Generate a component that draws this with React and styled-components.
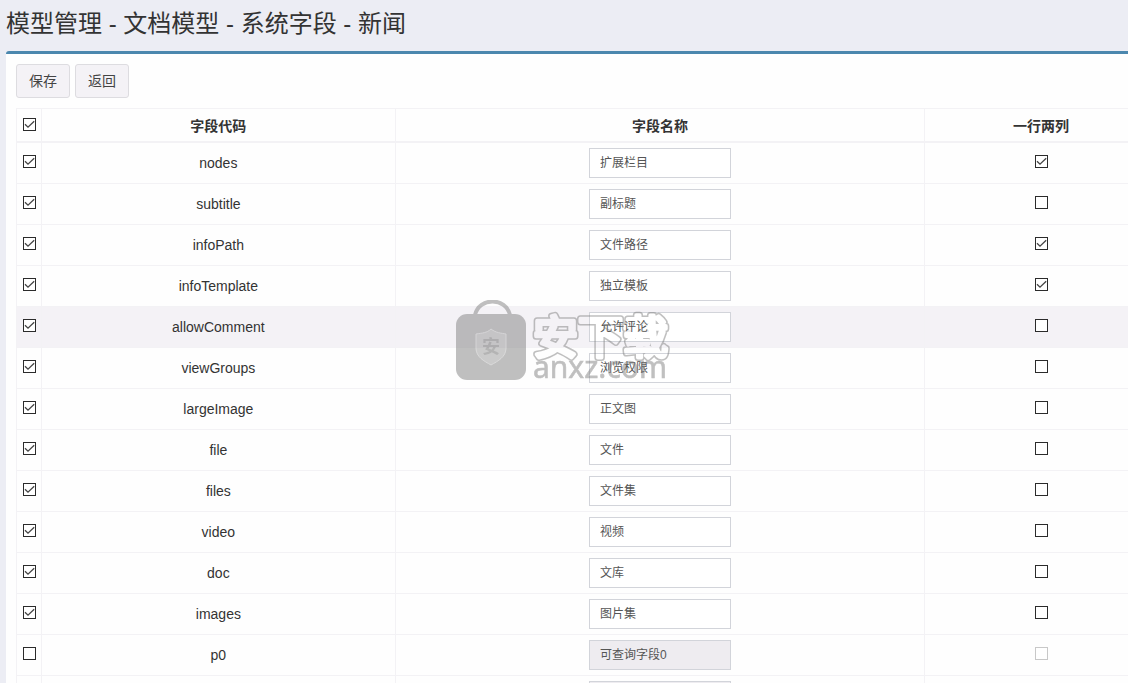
import React, { useState } from 'react';
import styled, { createGlobalStyle } from 'styled-components';

const FIELDS = [
  { code: 'nodes', name: '扩展栏目', selected: true, double: true },
  { code: 'subtitle', name: '副标题', selected: true },
  { code: 'infoPath', name: '文件路径', selected: true, double: true },
  { code: 'infoTemplate', name: '独立模板', selected: true, double: true },
  { code: 'allowComment', name: '允许评论', selected: true, active: true },
  { code: 'viewGroups', name: '浏览权限', selected: true },
  { code: 'largeImage', name: '正文图', selected: true },
  { code: 'file', name: '文件', selected: true },
  { code: 'files', name: '文件集', selected: true },
  { code: 'video', name: '视频', selected: true },
  { code: 'doc', name: '文库', selected: true },
  { code: 'images', name: '图片集', selected: true },
  { code: 'p0', name: '可查询字段0', disabled: true },
  { code: 'p1', name: '可查询字段1', disabled: true },
];

const Checkbox = ({ label, defaultChecked = false, disabled }) => {
  const [checked, setChecked] = useState(defaultChecked);

  return (
    <CheckWrap>
      <CheckInput
        type="checkbox"
        aria-label={label}
        checked={checked}
        disabled={disabled}
        onChange={(e) => setChecked(e.target.checked)}
      />
      {checked && (
        <CheckMark viewBox="0 0 13 13" aria-hidden="true">
          <path d="M2 6.2 L5 9.2 L11.2 3.2" />
        </CheckMark>
      )}
    </CheckWrap>
  );
};

const FieldRow = ({ field }) => (
  <Row $active={field.active}>
    <Cell><Checkbox label={`选择 ${field.code}`} defaultChecked={field.selected} /></Cell>
    <Cell>{field.code}</Cell>
    <Cell>
      <NameInput
        type="text"
        aria-label={`${field.code} 字段名称`}
        defaultValue={field.name}
        disabled={field.disabled}
      />
    </Cell>
    <Cell>
      <Checkbox
        label={`${field.code} 一行两列`}
        defaultChecked={field.double}
        disabled={field.disabled}
      />
    </Cell>
  </Row>
);

const Watermark = () => (
  <WatermarkSvg viewBox="0 0 216 84" aria-hidden="true">
    <defs>
      <mask id="outline" maskUnits="userSpaceOnUse" x="0" y="0" width="216" height="84">
        <g className="brand" strokeLinejoin="round">
          <text x="77" y="54" fill="#fff" stroke="#fff" strokeWidth="7">安下载</text>
          <text x="77" y="54" fill="#000" stroke="#000" strokeWidth="4">安下载</text>
        </g>
      </mask>
    </defs>
    <g opacity="0.48">
      <path d="M19 15 C23 -3 50 -3 54 15" fill="none" stroke="#7c7c7c" strokeWidth="4" />
      <rect x="0" y="14" width="70" height="66" rx="11" fill="#7c7c7c" />
      <path
        d="M35 29 C40 33 45 33 50 34 V48 C50 57 42 61 35 65 C28 61 20 57 20 48 V34 C26 33 31 33 35 29 Z"
        fill="#949494"
        stroke="#b4b4b4"
        strokeWidth="1"
      />
      <text className="badge" x="26" y="53" fill="#646464">安</text>
      <rect width="216" height="84" fill="#7c7c7c" mask="url(#outline)" />
      <text className="domain" x="77" y="78" fill="#7c7c7c" stroke="#7c7c7c" strokeWidth="0.6">anxz.com</text>
    </g>
  </WatermarkSvg>
);

const App = () => (
  <Page>
    <GlobalStyle />
    <Title>模型管理 - 文档模型 - 系统字段 - 新闻</Title>
    <Box>
      <Toolbar>
        <Button type="button">保存</Button>
        <Button type="button">返回</Button>
      </Toolbar>
      <TableWrap>
        <Table>
          <thead>
            <tr>
              <HeadCell $width="25px"><Checkbox label="全选" defaultChecked /></HeadCell>
              <HeadCell $width="31%">字段代码</HeadCell>
              <HeadCell $width="46.4%">字段名称</HeadCell>
              <HeadCell>一行两列</HeadCell>
            </tr>
          </thead>
          <tbody>
            {FIELDS.map((field) => <FieldRow key={field.code} field={field} />)}
          </tbody>
        </Table>
      </TableWrap>
    </Box>
    <Watermark />
  </Page>
);

const GlobalStyle = createGlobalStyle`
  * {
    box-sizing: border-box;
  }

  body {
    margin: 0;
    color: #333;
    font-family: 'Liberation Sans', 'Noto Sans CJK SC', sans-serif;
    font-size: 14px;
    line-height: 20px;
  }
`;

const Page = styled.div`
  position: relative;
  height: 100vh;
  overflow: hidden;
  padding-left: 6px;
  background: #ecedf4;
`;

const Title = styled.h1`
  margin: 0;
  padding: 9px 0 12px;
  font-size: 24px;
  font-weight: 400;
  line-height: 30px;
`;

const Box = styled.section`
  padding: 10px 0 10px 10px;
  background: #fefefe;
  border-top: 3px solid #4b87ae;
  border-top-left-radius: 3px;
`;

const Toolbar = styled.div`
  display: flex;
  gap: 5px;
  margin-bottom: 10px;
`;

const Button = styled.button`
  height: 34px;
  padding: 0 12px;
  color: #444;
  background: #f4f2f6;
  border: 1px solid #dddce0;
  border-radius: 3px;
  font: inherit;
  cursor: pointer;
`;

const TableWrap = styled.div`
  overflow: hidden;
`;

/* the last column runs on past the right edge of the frame */
const Table = styled.table`
  width: calc(100% + 30px);
  table-layout: fixed;
  border-collapse: collapse;
  text-align: center;
`;

const HeadCell = styled.th`
  width: ${props => props.$width || 'auto'};
  height: 33px;
  padding: 2px 0 0;
  border: 1px solid #f3f2f5;
  border-bottom-width: 2px;
  font-weight: 700;
`;

const Row = styled.tr`
  background: ${props => (props.$active ? '#f4f2f6' : 'transparent')};
`;

const Cell = styled.td`
  height: 41px;
  padding: 5px 0;
  border: 1px solid #f3f2f5;
`;

const CheckWrap = styled.span`
  position: relative;
  display: block;
  width: 13px;
  height: 13px;
  margin: 0 auto 2px;
`;

const CheckInput = styled.input`
  appearance: none;
  display: block;
  width: 13px;
  height: 13px;
  margin: 0;
  background: #fff;
  border: 1px solid #2b2b2b;

  &:disabled {
    border-color: #c8c8c8;
  }
`;

const CheckMark = styled.svg`
  position: absolute;
  inset: 0;
  pointer-events: none;

  path {
    fill: none;
    stroke: #444;
    stroke-width: 1.3;
  }
`;

const NameInput = styled.input`
  display: block;
  width: 142px;
  height: 30px;
  margin: 0 auto;
  padding: 4px 10px 6px;
  color: #555;
  background: #fff;
  border: 1px solid #d2d4da;
  border-radius: 0;
  font-family: inherit;
  font-size: 12px;
  line-height: 18px;

  &:disabled {
    background: #eeecf0;
  }
`;

const WatermarkSvg = styled.svg`
  position: absolute;
  top: 50%;
  left: 50%;
  width: 216px;
  height: 84px;
  transform: translate(-50%, -50%);
  pointer-events: none;

  .brand {
    font-family: 'Noto Sans CJK SC', sans-serif;
    font-size: 45px;
    font-weight: 400;
  }

  .badge {
    font-family: 'Noto Sans CJK SC', sans-serif;
    font-size: 18px;
    font-weight: 700;
  }

  .domain {
    font-family: 'Noto Sans', sans-serif;
    font-size: 30px;
  }
`;

export default App;
